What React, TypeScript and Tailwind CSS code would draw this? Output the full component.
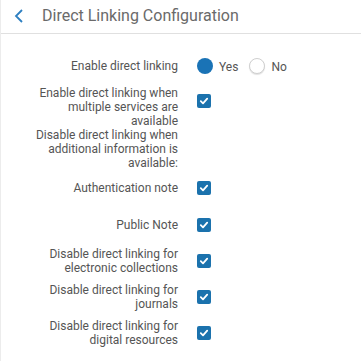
import React from "react";

const font = { fontFamily: "Roboto, 'Liberation Sans', sans-serif" };

function Check() {
  return (
    <span className="flex h-[14px] w-[14px] items-center justify-center rounded-[2px] bg-[#1b72ad]">
      <svg width="10" height="10" viewBox="0 0 10 10" fill="none">
        <path d="M1.8 5.2 L4 7.3 L8.2 2.6" stroke="white" strokeWidth="1.8" strokeLinecap="round" strokeLinejoin="round" />
      </svg>
    </span>
  );
}

function Row({ label, children, className = "" }: { label: React.ReactNode; children?: React.ReactNode; className?: string }) {
  return (
    <div className={`flex items-start ${className}`}>
      <div className="w-[177px] shrink-0 pl-[30px] text-right text-[12px] leading-[14px] text-[#555]">{label}</div>
      <div className="ml-[19px] flex items-center">{children}</div>
    </div>
  );
}

export default function App() {
  return (
    <div className="h-[361px] w-[361px] border-l border-[#ececec] bg-white" style={font}>
      <div className="flex h-[34px] items-center border-b border-[#e0e0e0] pl-[13px]">
        <svg width="10" height="14" viewBox="0 0 10 14" fill="none" className="mt-[-2px]">
          <path d="M8 1 L2 7 L8 13" stroke="#2d7fc1" strokeWidth="1.8" />
        </svg>
        <span className="ml-[18px] mt-[-2px] text-[16px] text-[#6a6a6a]">Direct Linking Configuration</span>
      </div>

      <div className="pt-[25px]">
        <Row label="Enable direct linking">
          <span className="mt-[-1px] h-[16px] w-[16px] rounded-full bg-[#1a73b6]" />
          <span className="ml-[6px] text-[12px] leading-[14px] text-[#555]">Yes</span>
          <span className="ml-[11px] mt-[-1px] h-[16px] w-[16px] rounded-full border border-[#cfcfcf] bg-white shadow-[0_1px_1px_rgba(0,0,0,0.12)]" />
          <span className="ml-[6px] text-[12px] leading-[14px] text-[#555]">No</span>
        </Row>
        <Row className="mt-[12px]" label={<>Enable direct linking when<br />multiple services are<br />available</>}>
          <span className="mt-[8px]"><Check /></span>
        </Row>
        <Row label={<>Disable direct linking when<br />additional information is<br />available:</>} />
        <Row className="mt-[11px]" label="Authentication note">
          <Check />
        </Row>
        <Row className="mt-[23px]" label="Public Note">
          <Check />
        </Row>
        <Row className="mt-[15px]" label={<>Disable direct linking for<br />electronic collections</>}>
          <span className="mt-[7px]"><Check /></span>
        </Row>
        <Row className="mt-[8px]" label={<>Disable direct linking for<br />journals</>}>
          <span className="mt-[7px]"><Check /></span>
        </Row>
        <Row className="mt-[8px]" label={<>Disable direct linking for<br />digital resources</>}>
          <span className="mt-[7px]"><Check /></span>
        </Row>
      </div>
    </div>
  );
}
